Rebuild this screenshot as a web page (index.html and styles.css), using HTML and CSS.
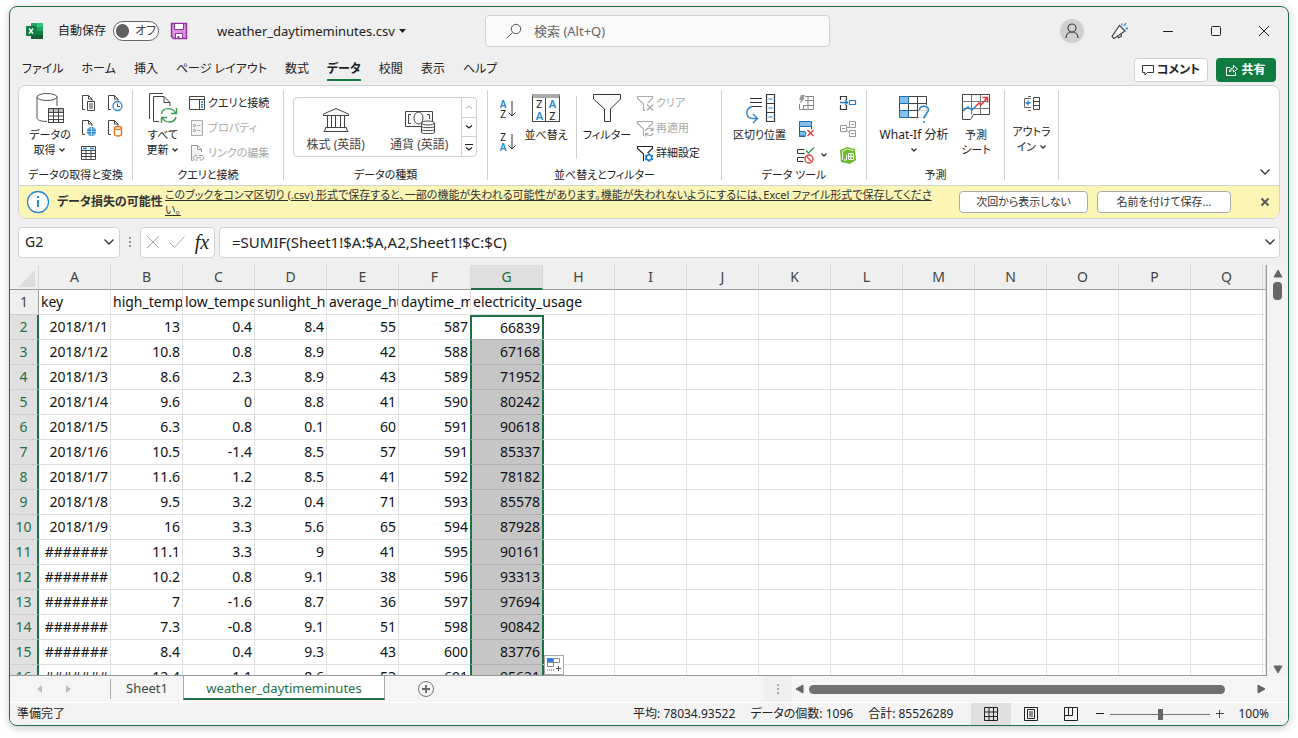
FILE: index.html
```html
<!DOCTYPE html>
<html lang="ja">
<head>
<meta charset="utf-8">
<title>weather_daytimeminutes.csv - Excel</title>
<link rel="stylesheet" href="styles.css">
</head>
<body>
<svg class="defs" width="0" height="0" aria-hidden="true">
  <symbol id="chev" viewBox="0 0 8 8"><path d="M1.5 2.5 4 5l2.500-2.500" fill="none" stroke="#333" stroke-width="1.300"/></symbol>
  <symbol id="chev-lg" viewBox="0 0 12 12"><path d="M1.500 3.500 6 8l4.500-4.500" fill="none" stroke="#333" stroke-width="1.300"/></symbol>
  <symbol id="doc" viewBox="0 0 18 18"><path d="M5 15.500H2.500v-14h6l3.500 3.500v2M8.500 1.500V5H12" fill="none" stroke="#444"/></symbol>
  <symbol id="funnel" viewBox="0 0 18 18"><path d="M1.500 2.500h15v2l-6 5.500v6.500h-3V10l-6-5.500z" fill="none" stroke="currentColor" stroke-width="1.100"/></symbol>
</svg>
<div class="window">
  <header class="titlebar">
    <div class="title-left">
      <svg class="logo" width="18" height="18" viewBox="0 0 18 18"><path d="M5 1h12v16H5z" fill="#21a366"/><path d="M5 1h6v4H5z" fill="#21a366"/><path d="M11 1h6v4h-6z" fill="#33c481"/><path d="M5 5h6v8H5z" fill="#107c41"/><path d="M11 9h6v4h-6z" fill="#107c41"/><path d="M5 13h12v4H5z" fill="#185c37"/><rect x="0" y="4" width="10" height="10" rx="1" fill="#107c41"/><path d="m3 6.500 4 5M7 6.500l-4 5" stroke="#fff" stroke-width="1.400"/></svg>
      <span class="autosave" id="autosave-label">自動保存</span>
      <button class="toggle" role="switch" aria-checked="false" aria-labelledby="autosave-label"><span class="knob"></span><span>オフ</span></button>
      <button class="plain save" aria-label="上書き保存"><svg width="18" height="18" viewBox="0 0 18 18"><path d="M1.500 1.500h15v15h-13l-2-2z" fill="#d793dc" stroke="#8e2f9b" stroke-width="1.400"/><path d="M4.500 1.500h9v6h-9zM5.500 11.500h7v5h-7z" fill="#fff" stroke="#8e2f9b"/><path d="M7.500 14h2v2.500h-2z" fill="#8e2f9b"/></svg></button>
      <button class="plain filename">weather_daytimeminutes.csv <svg width="7" height="4" viewBox="0 0 7 4"><path d="M0 0h7L3.500 4z" fill="#222"/></svg></button>
    </div>
    <label class="search"><svg width="16" height="16" viewBox="0 0 16 16"><circle cx="10" cy="6" r="4.700" fill="none" stroke="#555"/><path d="m6.500 9.500-6 6" stroke="#555"/></svg><input type="text" placeholder="検索 (Alt+Q)" aria-label="検索"></label>
    <div class="title-right">
      <button class="plain" aria-label="アカウント"><svg width="24" height="24" viewBox="0 0 24 24"><circle cx="12" cy="12" r="12" fill="#cfcfcf"/><circle cx="12" cy="9" r="4" fill="none" stroke="#444" stroke-width="1.200"/><path d="M6 19c0-8 12-8 12 0" fill="none" stroke="#444" stroke-width="1.200"/></svg></button>
      <button class="plain" aria-label="新機能"><svg width="20" height="20" viewBox="0 0 20 20"><path d="M9.500 4.500 15 10 4 17.500 2 15.500z" fill="#fafafa" stroke="#444" stroke-width="1.200"/><path d="m7.500 15 1 1.800 3-1.600-.5-2.500" fill="none" stroke="#444" stroke-width="1.200"/><path d="M12 2.500v2M16 2l-2 3M15.500 7.500h2.500" stroke="#2a88d0" stroke-width="1.300"/></svg></button>
      <button class="plain" aria-label="最小化"><svg width="12" height="12" viewBox="0 0 12 12"><path d="M1 6.500h10" stroke="#222"/></svg></button>
      <button class="plain" aria-label="最大化"><svg width="12" height="12" viewBox="0 0 12 12"><rect x="1.500" y="1.500" width="9" height="9" rx="1" fill="none" stroke="#222"/></svg></button>
      <button class="plain" aria-label="閉じる"><svg width="12" height="12" viewBox="0 0 12 12"><path d="m1 1 10 10M11 1 1 11" stroke="#222"/></svg></button>
    </div>
  </header>

  <nav class="tabs">
    <a href="#">ファイル</a><a href="#">ホーム</a><a href="#">挿入</a><a href="#">ページ レイアウト</a><a href="#">数式</a><a href="#" class="active">データ</a><a href="#">校閲</a><a href="#">表示</a><a href="#">ヘルプ</a>
    <span class="grow"></span>
    <div class="tab-actions">
      <button class="comment"><svg width="12" height="12" viewBox="0 0 12 12"><path d="M.5 1.500h11v7H5.500l-2.500 2.500V8.500H.5z" fill="none" stroke="#333"/></svg>コメント</button>
      <button class="share"><svg width="12" height="12" viewBox="0 0 12 12"><path d="M4 3.500H.5v8h9V8M3.500 8c0-3 2-4 4-4V1.500L11.500 5 7.500 8V6c-2 0-3 .5-4 2z" fill="none" stroke="#fff"/></svg>共有</button>
    </div>
  </nav>

  <section class="ribbon-card">
    <div class="ribbon">
      <div class="group g-get">
        <div class="tools">
          <button class="big"><svg width="30" height="32" viewBox="0 0 30 32"><path d="M2 5v21c0 2 4 3.500 10 3.500M22 5v9" fill="none" stroke="#555"/><ellipse cx="12" cy="5" rx="10" ry="3.500" fill="#fff" stroke="#555"/><path d="M13.500 16.500h15v14h-15z" fill="#fff" stroke="#444"/><path d="M14 17h14v3H14z" fill="#bbb"/><path d="M13.500 20.500h15M13.500 24h15M13.500 27.500h15M18.500 17v13.500M23.500 17v13.500" stroke="#444"/></svg><span>データの<br>取得 <svg class="cv"><use href="#chev"/></svg></span></button>
          <div class="icon-grid">
            <button class="plain" aria-label="テキストまたは CSV から"><svg width="18" height="18" viewBox="0 0 18 18"><use href="#doc"/><path d="M7.500 7.500h7v9h-7z" fill="#fff" stroke="#444"/><path d="M9 10h4M9 12h4M9 14h4" stroke="#444"/></svg></button>
            <button class="plain" aria-label="最近使ったソース"><svg width="18" height="18" viewBox="0 0 18 18"><use href="#doc"/><circle cx="11.500" cy="12" r="4.500" fill="#fff" stroke="#2a88d0" stroke-width="1.300"/><path d="M11.500 9.500v3H14" fill="none" stroke="#444"/></svg></button>
            <button class="plain" aria-label="Web から"><svg width="18" height="18" viewBox="0 0 18 18"><use href="#doc"/><circle cx="11.500" cy="12.500" r="4.500" fill="#1a7fd0"/><path d="M7 12.500h9M11.500 8v9M8 10h7M8 15h7" stroke="#cfe6f8" stroke-width=".8"/></svg></button>
            <button class="plain" aria-label="既存の接続"><svg width="18" height="18" viewBox="0 0 18 18"><use href="#doc"/><path d="M8.500 9v6.500c0 2 7 2 7 0V9" fill="#fff" stroke="#e0700f" stroke-width="1.300"/><ellipse cx="12" cy="9" rx="3.500" ry="1.500" fill="#fff" stroke="#e0700f" stroke-width="1.300"/></svg></button>
            <button class="plain" aria-label="テーブルまたは範囲から"><svg width="18" height="18" viewBox="0 0 18 18"><path d="M1.500 2.500h14v13h-14z" fill="#fff" stroke="#444"/><path d="M2 6.500h13.500M2 9.500h13.500M2 12.500h13.500M6 6.500v9M11 6.500v9" stroke="#444"/><path d="M3 4.500h4M10 4.500h4" stroke="#1a7fd0" stroke-width="1.600"/></svg></button>
          </div>
        </div>
        <h3>データの取得と変換</h3>
      </div>

      <div class="group g-query">
        <div class="tools">
          <button class="big"><svg width="30" height="32" viewBox="0 0 30 32"><path d="M1.500 27V1.500H15" fill="none" stroke="#444"/><path d="M11 29.500H5.500v-25H16l6 6V14M16 4.500v6h6" fill="none" stroke="#444"/><path d="M13.500 22c1-7 11-7 14-1M28.500 16v5.500H23M28 25c-2 7-11 6-13.500 1M13.500 31v-5.500H19" fill="none" stroke="#3a9e52" stroke-width="1.400"/></svg><span>すべて<br>更新 <svg class="cv"><use href="#chev"/></svg></span></button>
          <div class="rows">
            <button class="row-btn"><svg width="18" height="18" viewBox="0 0 18 18"><path d="M1.500 2.500h15v13h-15zM1.500 5.500h15" fill="none" stroke="#444"/><path d="M11.500 5.500v10" stroke="#444"/><path d="M13 8h2M13 10.500h2M13 13h2" stroke="#1a7fd0" stroke-width="1.300"/></svg>クエリと接続</button>
            <button class="row-btn" disabled><svg width="18" height="18" viewBox="0 0 18 18"><path d="M3.500 1.500h11v15h-11z" fill="#f3f3f3" stroke="#aaa"/><path d="M5.500 5.500h2v2h-2zM5.500 10.500h2v2h-2z" fill="none" stroke="#aaa"/><path d="M9.500 6.500h3M9.500 11.500h3" stroke="#aaa"/></svg>プロパティ</button>
            <button class="row-btn" disabled><svg width="18" height="18" viewBox="0 0 18 18"><path d="M5 16.500H3.500v-15h6l4 4V8M9.500 1.500v4h4" fill="#f3f3f3" stroke="#999"/><path d="M9 11.500H7.500c-3 0-3 4.500 0 4.500H10M11 11.500h2.500c3 0 3 4.500 0 4.500H12M8 13.800h5" fill="none" stroke="#999"/></svg>リンクの編集</button>
          </div>
        </div>
        <h3>クエリと接続</h3>
      </div>

      <div class="group g-types">
        <div class="tools">
          <div class="gallery">
            <button class="type"><svg width="28" height="28" viewBox="0 0 28 28"><path d="M1.500 9.500V8L14 2.500 26.500 8v1.500zM5.500 9.500v12M9.500 9.500v12M13.500 9.500v12M18.500 9.500v12M22.500 9.500v12M3.500 21.500h21v1.500l1.500 2.500h-24l1.500-2.500z" fill="#f8f8f8" stroke="#444"/></svg>株式 (英語)</button>
            <button class="type"><svg width="32" height="28" viewBox="0 0 32 28"><path d="M2.500 5.500h27v15h-27z" fill="#fafafa" stroke="#444"/><path d="M8 8.500H5.500v9H8M24 8.500h2.500V13" fill="none" stroke="#444"/><ellipse cx="15.500" cy="12" rx="4.500" ry="6" fill="#fff" stroke="#444"/><path d="M18.500 17v9.500c0 1.500 13 1.500 13 0V17" fill="#fff" stroke="#444"/><ellipse cx="25" cy="17" rx="6.500" ry="2" fill="#fff" stroke="#444"/><path d="M18.500 20.500c0 1.500 13 1.500 13 0M18.500 23.500c0 1.500 13 1.500 13 0" fill="none" stroke="#444"/></svg>通貨 (英語)</button>
            <div class="scroller">
              <button aria-label="上へ" disabled><svg width="8" height="8" viewBox="0 0 8 8"><path d="M1 5.500 4 3l3 2.500" fill="none" stroke="#aaa"/></svg></button>
              <button aria-label="下へ"><svg width="8" height="8" viewBox="0 0 8 8"><path d="M1 2.500 4 5l3-2.500" fill="none" stroke="#222" stroke-width="1.300"/></svg></button>
              <button aria-label="その他"><svg width="8" height="8" viewBox="0 0 8 8"><path d="M0 1.500h8M1 4.500 4 7l3-2.500" fill="none" stroke="#222" stroke-width="1.200"/></svg></button>
            </div>
          </div>
        </div>
        <h3>データの種類</h3>
      </div>

      <div class="group g-sort">
        <div class="tools">
          <div class="sorts">
            <button class="plain az" aria-label="昇順"><span><b>A</b><i>Z</i></span><svg width="8" height="18" viewBox="0 0 8 18"><path d="M4 1v15M.5 12.500 4 16l3.500-3.500" fill="none" stroke="#333"/></svg></button>
            <button class="plain az" aria-label="降順"><span><i>Z</i><b>A</b></span><svg width="8" height="18" viewBox="0 0 8 18"><path d="M4 1v15M.5 12.500 4 16l3.500-3.500" fill="none" stroke="#333"/></svg></button>
          </div>
          <button class="big sort"><span class="sort-icon"><i>Z</i><b>A</b><b>A</b><i>Z</i></span><span>並べ替え</span></button>
          <span class="divider"></span>
          <button class="big filter"><svg width="30" height="32" viewBox="0 0 30 32"><path d="M1.500 2.500h27V7l-10 10v12.500h-6V17l-11-10z" fill="#fafafa" stroke="#333"/></svg><span>フィルター</span></button>
          <div class="rows">
            <button class="row-btn" disabled><svg width="18" height="18" viewBox="0 0 18 18"><use href="#funnel"/><path d="M9 9h9v9H9z" fill="#fff"/><path d="m11 10.500 6 6M17 10.500l-6 6" stroke="#aaa" stroke-width="1.200"/></svg>クリア</button>
            <button class="row-btn" disabled><svg width="18" height="18" viewBox="0 0 18 18"><use href="#funnel"/><path d="M8 8h10v10H8z" fill="#fff"/><path d="M9.500 12c1-4 6-3.500 7-1M17 8.500v3h-3M17 14c-1 3.500-6 3-7 .5M9.500 17.500v-3h3" fill="none" stroke="#aaa" stroke-width="1.200"/></svg>再適用</button>
            <button class="row-btn"><svg width="18" height="18" viewBox="0 0 18 18"><use href="#funnel"/><path d="M8 9h10v9H8z" fill="#fff"/><circle cx="13" cy="13.500" r="2.800" fill="none" stroke="#1a7fd0" stroke-width="1.600"/><path d="M13 9v2M13 16v2M9 11.500l2 1M15 14.500l2 1M9 15.500l2-1M15 12.500l2-1" stroke="#1a7fd0" stroke-width="1.500"/></svg>詳細設定</button>
          </div>
        </div>
        <h3>並べ替えとフィルター</h3>
      </div>

      <div class="group g-tools">
        <div class="tools">
          <button class="big"><svg width="32" height="32" viewBox="0 0 32 32"><path d="M6 6.500h12M6 10.500h12M8 14.500h10" stroke="#333"/><path d="M8 14.500c-7 2-7 12 1 12h4M9 22l4.500 4.500L9 31" fill="none" stroke="#2a88d0" stroke-width="1.400"/><path d="M22.500 2.500h8v27h-8zM22.500 11.500h8M22.500 20.500h8" fill="#fafafa" stroke="#333" stroke-width="1.200"/><path d="M24.500 7h4M24.500 16h4M24.500 25h4" stroke="#1a7fd0" stroke-width="1.200"/></svg><span>区切り位置</span></button>
          <div class="icon-col">
            <button class="plain" aria-label="フラッシュ フィル" disabled><svg width="18" height="18" viewBox="0 0 18 18"><path d="M8 2.500h8.500v13h-14V10M11 2.500v13M6.500 11v4.500M8 6.500h8.500M6 11.500h10.500" fill="none" stroke="#888"/><path d="M4 1h4L6.500 4H8l-5.500 6L4 6H2z" fill="#999"/></svg></button>
            <button class="plain" aria-label="重複の削除"><svg width="18" height="18" viewBox="0 0 18 18"><path d="M2.500 1.500h12v5h-12z" fill="#83beec" stroke="#1a6fb5"/><path d="M2.500 6.500v10h6M14.500 6.500V9" fill="#fff" stroke="#444"/><path d="M2.500 11.500H8l1 2-1 2.500H2.500z" fill="#83beec" stroke="#1a6fb5"/><path d="m10.500 10 6 6M16.500 10l-6 6" stroke="#e53935" stroke-width="1.300"/></svg></button>
            <button class="plain split" aria-label="データの入力規則"><svg width="18" height="18" viewBox="0 0 18 18"><path d="M7.500 3.500h-7v4h7M7.500 11.500h-7v4h6" fill="none" stroke="#333"/><path d="m9 4.500 2.500 2.500L17 1.500" fill="none" stroke="#2e9b4f" stroke-width="1.300"/><circle cx="12" cy="13" r="4" fill="#fff" stroke="#e53935" stroke-width="1.300"/><path d="m9.500 10.500 5 5" stroke="#e53935" stroke-width="1.300"/></svg><svg class="cv"><use href="#chev"/></svg></button>
          </div>
          <div class="icon-col">
            <button class="plain" aria-label="統合"><svg width="18" height="18" viewBox="0 0 18 18"><path d="M1.500 6V2.500h6V6M1.500 11v4.500h6V11" fill="none" stroke="#333" stroke-width="1.200"/><path d="M1 8.500h7M6 6l2.500 2.500L6 11" fill="none" stroke="#1a7fd0" stroke-width="1.300"/><path d="M10.500 6.500h6v4h-6z" fill="#fff" stroke="#1a7fd0" stroke-width="1.200"/></svg></button>
            <button class="plain" aria-label="リレーションシップ" disabled><svg width="18" height="18" viewBox="0 0 18 18"><path d="M1.500 5.500h6v6h-6zM10.500 1.500h6v6h-6zM10.500 10.500h6v6h-6zM7.500 7.500h3M7.500 10l3 2.500M3 8.500h3M12 4.500h3M12 13.500h3" fill="none" stroke="#999"/></svg></button>
            <button class="plain" aria-label="データ モデルの管理"><svg width="18" height="18" viewBox="0 0 18 18"><path d="M1 4 8 1l8 2 1 11-6 4-9-2z" fill="#6cbb2e"/><path d="M3.500 14V5l5-2 6 1.500" fill="none" stroke="#e6f6d9"/><path d="M9.500 7.500h5v6h-5zM9.500 10.500h5M12 7.500v6M7.500 9v5H5" fill="none" stroke="#fff"/></svg></button>
          </div>
        </div>
        <h3>データ ツール</h3>
      </div>

      <div class="group g-forecast">
        <div class="tools">
          <button class="big whatif"><svg width="32" height="32" viewBox="0 0 32 32"><path d="M1.500 4.500h27v21h-27z" fill="#fff" stroke="#444"/><path d="M1.500 11.500h27M1.500 18.500h27M10.500 4.500v21M19.500 4.500v21" stroke="#444"/><path d="M1.500 4.500h9v7h-9zM1.500 18.500h9v7h-9z" fill="#83beec" stroke="#1a6fb5"/><path d="M20.500 13h11v19h-11z" fill="#fff" opacity=".8"/><path d="M21.500 18c0-5 9-5 9 0 0 3-4.500 4-4.500 8.500M26 29v2" fill="none" stroke="#2a88d0" stroke-width="1.600"/></svg><span>What-If 分析<br><svg class="cv"><use href="#chev"/></svg></span></button>
          <button class="big forecast"><svg width="30" height="32" viewBox="0 0 30 32"><path d="M1.500 2.500h27v20h-16l-3 5h-8z" fill="#fff" stroke="#444"/><path d="M1.500 9.500h27M1.500 16.500h27M10.500 2.500v20M19.500 2.500v20" stroke="#777"/><path d="M2 19l5-4 4 3 4-4" fill="none" stroke="#2a88d0" stroke-width="1.500"/><path d="m15 14 3-3 2 2 6-7M21.500 5.500h5v5" fill="none" stroke="#e53935" stroke-width="1.500"/></svg><span>予測<br>シート</span></button>
        </div>
        <h3>予測</h3>
      </div>

      <div class="group g-outline">
        <div class="tools">
          <button class="big outline"><svg width="18" height="18" viewBox="0 0 18 18"><path d="M8 3.500H1.500v9H8M5 1.500h3M5 15.500h3" fill="none" stroke="#666"/><path d="M2.500 8h5M5 5.500v5" stroke="#1a7fd0" stroke-width="1.300"/><path d="M10.500 2.500h6v12h-6zM10.500 6.500h6M10.500 10.500h6" fill="none" stroke="#444"/></svg><span>アウトラ<br>イン <svg class="cv"><use href="#chev"/></svg></span></button>
        </div>
      </div>
      <span class="grow"></span>
      <button class="plain collapse" aria-label="リボンを折りたたむ"><svg width="12" height="12"><use href="#chev-lg"/></svg></button>
    </div>

    <div class="message">
      <svg width="24" height="24" viewBox="0 0 24 24"><circle cx="12" cy="12" r="10.500" fill="#fff" stroke="#2a88d0" stroke-width="1.300"/><path d="M12 10v7M12 6v2" stroke="#2a88d0" stroke-width="2"/></svg>
      <strong>データ損失の可能性</strong>
      <a href="#">このブックをコンマ区切り (.csv) 形式で保存すると、一部の機能が失われる可能性があります。機能が失われないようにするには、Excel ファイル形式で保存してください。</a>
      <button class="msg-btn">次回から表示しない</button>
      <button class="msg-btn wide">名前を付けて保存...</button>
      <button class="plain dismiss" aria-label="閉じる"><svg width="10" height="10" viewBox="0 0 10 10"><path d="m1.500 1.500 7 7M8.500 1.500l-7 7" stroke="#555" stroke-width="1.800"/></svg></button>
    </div>
  </section>

  <div class="formula-bar">
    <label class="namebox"><input type="text" value="G2" aria-label="名前ボックス"><svg width="12" height="12"><use href="#chev-lg"/></svg></label>
    <svg class="grip" width="4" height="12" viewBox="0 0 4 12"><path d="M1 1h2v2H1zM1 5h2v2H1zM1 9h2v2H1z" fill="#999"/></svg>
    <div class="fx">
      <button class="plain" aria-label="キャンセル"><svg width="14" height="14" viewBox="0 0 14 14"><path d="m1 1 12 12M13 1 1 13" stroke="#aaa"/></svg></button>
      <button class="plain" aria-label="入力"><svg width="16" height="14" viewBox="0 0 16 14"><path d="m.5 7.500 5 5L15.500 1.500" fill="none" stroke="#aaa"/></svg></button>
      <button class="plain fx-btn" aria-label="関数の挿入">fx</button>
    </div>
    <label class="formula"><input type="text" value="=SUMIF(Sheet1!$A:$A,A2,Sheet1!$C:$C)" aria-label="数式バー"><svg width="12" height="12"><use href="#chev-lg"/></svg></label>
  </div>

  <main class="sheet">
    <div class="grid-wrap">
      <table class="grid">
        <colgroup id="cols"><col class="c-num"></colgroup>
        <thead><tr id="head"><th class="corner"><svg width="17" height="17" viewBox="0 0 17 17"><path d="M17 0v17H0z" fill="#dcdcdc"/></svg></th></tr></thead>
        <tbody id="rows"></tbody>
      </table>
      <button class="autofill" aria-label="オートフィル オプション"><svg width="16" height="16" viewBox="0 0 16 16"><path d="M1 1h6v5H1z" fill="#3b78e7"/><path d="M7.500 1.500h6v4h-6zM1.500 5.500h6v4h-6z" fill="#fff" stroke="#888"/><path d="M1 13h8" stroke="#555" stroke-dasharray="1 1"/><path d="M10 11.500h5M12.500 9v5" stroke="#555"/></svg></button>
    </div>
    <div class="vscroll">
      <svg width="10" height="8" viewBox="0 0 10 8"><path d="M5 0l4 7H1z" fill="#666" stroke="#666" stroke-linejoin="round"/></svg>
      <span class="vthumb"></span>
      <span class="grow"></span>
      <svg width="10" height="8" viewBox="0 0 10 8"><path d="M5 8l4-7H1z" fill="#666" stroke="#666" stroke-linejoin="round"/></svg>
    </div>
  </main>

  <div class="sheetbar">
    <div class="sheetnav">
      <button class="plain" aria-label="前のシート"><svg width="6" height="8" viewBox="0 0 6 8"><path d="M5 0v8L0 4z" fill="#bbb"/></svg></button>
      <button class="plain" aria-label="次のシート"><svg width="6" height="8" viewBox="0 0 6 8"><path d="M1 0v8l5-4z" fill="#bbb"/></svg></button>
    </div>
    <button class="sheet-tab">Sheet1</button>
    <button class="sheet-tab current">weather_daytimeminutes</button>
    <button class="plain add" aria-label="新しいシート"><svg width="18" height="18" viewBox="0 0 18 18"><circle cx="9" cy="9" r="7.500" fill="none" stroke="#777"/><path d="M5 9h8M9 5v8" stroke="#666" stroke-width="1.800"/></svg></button>
    <span class="grow"></span>
    <span class="splitter"><svg width="4" height="12" viewBox="0 0 4 12"><path d="M1 1h2v2H1zM1 5h2v2H1zM1 9h2v2H1z" fill="#aaa"/></svg></span>
    <div class="hscroll">
      <svg width="8" height="10" viewBox="0 0 8 10"><path d="M0 5l7-4v8z" fill="#666" stroke="#666" stroke-linejoin="round"/></svg>
      <span class="hthumb"></span>
      <svg width="8" height="10" viewBox="0 0 8 10"><path d="M8 5L1 1v8z" fill="#666" stroke="#666" stroke-linejoin="round"/></svg>
    </div>
  </div>

  <footer class="status">
    <span>準備完了</span>
    <span class="grow"></span>
    <span>平均: 78034.93522</span>
    <span>データの個数: 1096</span>
    <span>合計: 85526289</span>
    <div class="views">
      <button class="on" aria-label="標準"><svg width="14" height="14" viewBox="0 0 14 14"><path d="M.5.5h13v13H.5zM.5 5h13M.5 9.500h13M5 .5v13M9.500.5v13" fill="none" stroke="#222"/></svg></button>
      <button aria-label="ページ レイアウト"><svg width="14" height="14" viewBox="0 0 14 14"><path d="M.5.5h13v13H.5zM3.500 2.500h7v9h-7zM5 5h4M5 7h4M5 9h4" fill="none" stroke="#222"/></svg></button>
      <button aria-label="改ページ プレビュー"><svg width="14" height="14" viewBox="0 0 14 14"><path d="M.5.5h13v13H.5zM.5 8.500h8v-8M4.500.5v8" fill="none" stroke="#222"/></svg></button>
    </div>
    <div class="zoom">
      <button class="plain" aria-label="縮小"><svg width="8" height="8" viewBox="0 0 8 8"><path d="M0 3.500h8" stroke="#222"/></svg></button>
      <input type="range" min="0" max="200" value="100" aria-label="ズーム">
      <button class="plain" aria-label="拡大"><svg width="8" height="8" viewBox="0 0 8 8"><path d="M0 3.500h8M3.500 0v8" stroke="#444"/></svg></button>
      <span>100%</span>
    </div>
  </footer>
</div>
<script src="app.js"></script>
</body>
</html>
```
FILE: styles.css
```css
* { box-sizing: border-box; }
html { background: #fff; }
body {
  margin: 0;
  padding: 6px 9px 12px;
  height: 100vh;
  font-family: "Noto Sans", "Noto Sans CJK JP", sans-serif;
  font-size: 12px;
  line-height: 16px;
  font-feature-settings: "palt";
  color: #222;
}
button, input { font: inherit; font-feature-settings: inherit; color: inherit; margin: 0; }
button { background: none; border: 0; padding: 0; white-space: nowrap; }
svg { display: block; flex: none; }
a { color: inherit; text-decoration: none; }
.defs { position: absolute; }
.grow { flex: 1; }
.plain { display: flex; align-items: center; justify-content: center; }

.window {
  display: flex;
  flex-direction: column;
  height: 100%;
  background: #efefef;
  border: 1px solid #1e7145;
  border-radius: 8px;
  overflow: hidden;
  box-shadow: 0 2px 8px rgba(0, 0, 0, .22);
}

/* Title bar */
.titlebar { display: flex; align-items: center; height: 48px; flex: none; }
.title-left { display: flex; align-items: center; width: 475px; padding-left: 16px; flex: none; }
.autosave { margin-left: 14px; width: 55px; }
.toggle {
  display: flex; align-items: center; gap: 6px;
  width: 46px; height: 20px; padding: 0 2px;
  border: 1px solid #666; border-radius: 10px; background: #fff; color: #444;
}
.knob { width: 14px; height: 14px; border-radius: 7px; background: #606060; }
.save { margin-left: 11px; }
.filename { margin-left: 29px; gap: 4px; font-size: 13px; }
.search {
  display: flex; align-items: center; gap: 10px;
  width: 345px; height: 32px; padding-left: 20px;
  border: 1px solid #cfcfcf; border-radius: 4px; background: #fafafa;
}
.search input { flex: 1; min-width: 0; border: 0; background: none; outline: 0; font-size: 13px; }
.search input::placeholder { color: #666; opacity: 1; }
.title-right { display: flex; margin-left: auto; }
.title-right .plain { width: 48px; height: 32px; }

/* Ribbon tabs */
.tabs { display: flex; align-items: center; height: 30px; flex: none; padding: 0 12px; gap: 18px; }
.tabs a { height: 22px; line-height: 20px; border-bottom: 2px solid transparent; white-space: nowrap; }
.tabs .active { font-weight: 700; border-color: #107c41; }
.tab-actions { display: flex; gap: 8px; }
.comment, .share {
  display: flex; align-items: center; justify-content: center; gap: 3px;
  height: 24px; border-radius: 4px; font-weight: 700;
}
.comment { width: 74px; background: #fff; border: 1px solid #d0d0d0; }
.share { width: 60px; background: #107c41; color: #fff; }

/* Ribbon */
.ribbon-card {
  flex: none; margin: 0 8px; background: #fff;
  border: 1px solid #d2d2d2; border-radius: 8px; overflow: hidden;
}
.ribbon { display: flex; height: 99px; padding: 4px 0 5px; font-size: 11px; }
.group { display: flex; flex-direction: column; flex: none; border-right: 1px solid #d0d0d0; }
.group h3 { margin: 0; font-size: 11px; font-weight: 400; text-align: center; line-height: 10px; white-space: nowrap; }
.tools { display: flex; flex: 1; }
.g-get { width: 114px; }
.g-query { width: 151px; }
.g-types { width: 204px; }
.g-sort { width: 234px; }
.g-tools { width: 145px; }
.g-forecast { width: 138px; }
.g-outline { width: 54px; }
.big { display: flex; flex-direction: column; align-items: center; width: 60px; line-height: 15px; padding-top: 2px; gap: 3px; align-self: flex-start; }
.cv { width: 8px; height: 8px; display: inline-block; }
.icon-grid { display: grid; grid-template-columns: 26px 26px; grid-auto-rows: 25px; }
.g-get .big { width: 62px; }
.g-get .icon-grid { margin-left: -5px; }
.rows { display: flex; flex-direction: column; }
.row-btn { display: flex; align-items: center; gap: 2px; height: 25px; }
.row-btn:disabled { color: #aaa; }
.g-query .rows { margin-left: -5px; }

.gallery { display: flex; width: 184px; height: 60px; margin: 7px 0 0 9px; border: 1px solid #d0d0d0; border-radius: 4px; font-size: 12px; }
.type { display: flex; flex-direction: column; align-items: center; justify-content: flex-end; flex: 1; padding-bottom: 3px; gap: 3px; color: #444; }
.scroller { display: flex; flex-direction: column; width: 15px; border-left: 1px solid #d0d0d0; }
.scroller button { flex: 1; display: flex; align-items: center; justify-content: center; }
.scroller button + button { border-top: 1px solid #d0d0d0; }

.sorts { display: flex; flex-direction: column; width: 40px; padding-top: 2px; }
.az { height: 33px; gap: 2px; }
.az span { display: flex; flex-direction: column; font-size: 10px; line-height: 10px; }
i { font-style: normal; }
.az b, .sort-icon b { color: #2a88d0; font-weight: 600; }
.sort { width: 36px; }
.sort-icon {
  display: grid; grid-template-columns: 13px 13px; justify-content: center;
  width: 28px; height: 28px; margin: 2px 0; border: 1px solid #444; border-top: 4px solid #aaa;
  line-height: 11px; text-align: center;
  background: linear-gradient(90deg, transparent 12px, #444 12px, #444 13px, transparent 13px);
}
.divider { width: 1px; height: 63px; margin: 6px 0 0 12px; background: #d0d0d0; }
.filter { margin-right: -1px; }
.g-tools .big { width: 75px; }
.icon-col { display: flex; flex-direction: column; width: 42px; }
.g-tools .icon-col + .icon-col { width: 26px; }
.icon-col .plain { height: 26px; justify-content: flex-start; }
.split { gap: 5px; }
.big.whatif { width: 94px; font-size: 12px; }
.big.forecast { width: 30px; }
.whatif span { text-align: center; }
.big.outline { width: 53px; padding-top: 5px; gap: 11px; }
.collapse { align-self: flex-end; width: 28px; height: 16px; }

/* Message bar */
.message {
  display: flex; align-items: center; height: 33px; padding-left: 7px;
  background: #fcf6b6; border-top: 1px solid #d2d2d2; color: #333;
}
.message strong { width: 103px; margin-left: 7px; white-space: nowrap; }
.message a { flex: 1; min-width: 0; margin-left: 5px; margin-right: 20px; font-size: 11px; line-height: 15px; text-decoration: underline; }
.msg-btn { width: 129px; height: 22px; border: 1px solid #aaa; border-radius: 4px; background: #fff; font-size: 11px; line-height: 18px; }
.msg-btn.wide { width: 134px; margin-left: 9px; }
.dismiss { width: 28px; height: 28px; margin-left: 20px; }

/* Formula bar */
.formula-bar { display: flex; align-items: center; flex: none; height: 46px; padding: 0 8px; }
.namebox, .fx, .formula { display: flex; align-items: center; height: 31px; background: #fff; border: 1px solid #d2d2d2; border-radius: 4px; }
.namebox input, .formula input { flex: 1; min-width: 0; border: 0; outline: 0; background: none; padding: 0; font-size: 15px; line-height: 20px; }
.namebox { width: 102px; padding: 0 4px 0 6px; }
.namebox input { font-size: 14px; }
.grip { margin: 0 8px; }
.fx { width: 75px; justify-content: space-around; }
.fx-btn { font-family: "Liberation Serif", serif; font-style: italic; font-size: 20px; }
.formula { flex: 1; margin-left: 4px; padding: 0 3px 0 12px; }

/* Grid */
.sheet { display: flex; flex: 1; min-height: 0; }
.grid-wrap { position: relative; flex: 1; min-width: 0; overflow: hidden; border-right: 1px solid #999; border-bottom: 1px solid #999; }
.grid { width: 100%; table-layout: fixed; border-collapse: separate; border-spacing: 0; font-family: "Noto Sans", sans-serif; font-size: 14px; line-height: 24px; background: #fff; }
.c-num { width: 29px; }
.c-data { width: 72px; }
.grid th, .grid td { height: 25px; padding: 0 2px; font-weight: 400; white-space: nowrap; overflow: hidden; border-right: 1px solid #e0e0e0; border-bottom: 1px solid #e0e0e0; color: #111; }
.grid td { text-align: right; }
.grid thead th { background: #efefef; color: #444; border-bottom-color: #999; border-right-color: #d8d8d8; }
.grid .corner { padding: 2px 2px 0 8px; }
.grid thead th.picked { background: #dfdfdf; color: #1e7145; border-bottom: 2px solid #1e7145; line-height: 23px; }
.grid tbody th { background: #efefef; color: #444; border-right-color: #999; border-bottom-color: #d0d0d0; padding: 0; }
.grid tbody th.picked { background: #e0e0e0; color: #1e7145; border-right: 2px solid #1e7145; }
.grid .label { text-align: left; }
.grid .spill { overflow: visible; border-right-color: transparent; }
.grid .sel { background: #c6c6c6; border-bottom-color: #b0b0b0; border-right-color: #1e7145; box-shadow: -1px 0 0 #1e7145, inset 1px 0 0 #1e7145, 1px 0 0 #1e7145; overflow: visible; }
.grid .first { background: #fff; border-top: 2px solid #1e7145; line-height: 22px; }
.autofill { position: absolute; left: 534px; bottom: 0; width: 20px; height: 20px; padding: 1px; background: #fff; border: 1px solid #aaa; }
.vscroll { display: flex; flex-direction: column; align-items: center; width: 21px; padding: 5px 0 3px; background: #f3f3f3; }
.vthumb { width: 9px; height: 18px; margin-top: 4px; border-radius: 4px; background: #666; }

/* Sheet tabs */
.sheetbar { display: flex; align-items: center; height: 27px; flex: none; background: #f5f5f5; border-bottom: 1px solid #fff; font-size: 13px; }
.sheetnav { display: flex; width: 101px; height: 20px; padding-left: 16px; border-right: 1px solid #aaa; }
.sheetnav .plain { width: 28px; }
.sheet-tab { width: 72px; height: 24px; align-self: flex-start; line-height: 24px; color: #444; }
.sheet-tab.current { width: 202px; background: #fff; border: 1px solid #aaa; border-top: 0; border-bottom: 2px solid #1e7145; color: #1e7145; }
.add { margin-left: 32px; }
.splitter { display: flex; align-items: center; justify-content: center; width: 28px; height: 100%; background: #efefef; }
.hscroll { display: flex; align-items: center; width: 40%; max-width: 473px; margin-right: 23px; padding-left: 4px; }
.hthumb { flex: 1; height: 9px; margin: 0 32px 0 5px; border-radius: 5px; background: #707070; }

/* Status bar */
.status { display: flex; align-items: center; height: 22px; flex: none; padding: 0 19px 0 7px; gap: 15px; background: #f3f3f3; white-space: nowrap; }
.views { display: flex; margin-left: 3px; }
.views button { width: 40px; height: 22px; display: flex; align-items: center; justify-content: center; }
.views .on { background: #dfdfdf; }
.zoom { display: flex; align-items: center; margin-left: -10px; }
.zoom span { margin-left: 14px; }
.zoom input { width: 100px; height: 16px; margin: 0 6px; appearance: none; background: linear-gradient(#777, #777) center / 100% 1px no-repeat; }
.zoom input::-webkit-slider-thumb { appearance: none; width: 5px; height: 11px; background: #666; }
```
FILE: app.js
```js
const columns = "ABCDEFGHIJKLMNOPQ".split("");
const labels = ["key", "high_temperature", "low_temperature", "sunlight_hours", "average_humidity", "daytime_minutes", "electricity_usage"];
const data = [
  ["2018/1/1", "13", "0.4", "8.4", "55", "587", "66839"],
  ["2018/1/2", "10.8", "0.8", "8.9", "42", "588", "67168"],
  ["2018/1/3", "8.6", "2.3", "8.9", "43", "589", "71952"],
  ["2018/1/4", "9.6", "0", "8.8", "41", "590", "80242"],
  ["2018/1/5", "6.3", "0.8", "0.1", "60", "591", "90618"],
  ["2018/1/6", "10.5", "-1.4", "8.5", "57", "591", "85337"],
  ["2018/1/7", "11.6", "1.2", "8.5", "41", "592", "78182"],
  ["2018/1/8", "9.5", "3.2", "0.4", "71", "593", "85578"],
  ["2018/1/9", "16", "3.3", "5.6", "65", "594", "87928"],
  ["#######", "11.1", "3.3", "9", "41", "595", "90161"],
  ["#######", "10.2", "0.8", "9.1", "38", "596", "93313"],
  ["#######", "7", "-1.6", "8.7", "36", "597", "97694"],
  ["#######", "7.3", "-0.8", "9.1", "51", "598", "90842"],
  ["#######", "8.4", "0.4", "9.3", "43", "600", "83776"],
  ["#######", "12.4", "-1.1", "8.6", "53", "601", "95621"]
];

function add(parent, tag, text, className) {
  const el = document.createElement(tag);
  if (text) el.textContent = text;
  if (className) el.className = className;
  parent.appendChild(el);
  return el;
}

const cols = document.getElementById("cols");
const head = document.getElementById("head");
columns.forEach((name) => {
  add(cols, "col", "", "c-data");
  add(head, "th", name, name === "G" ? "picked" : "");
});
add(cols, "col");
add(head, "th");

const body = document.getElementById("rows");
[labels, ...data].forEach((values, r) => {
  const row = add(body, "tr");
  add(row, "th", String(r + 1), r > 0 ? "picked" : "");
  for (let c = 0; c <= columns.length; c++) {
    let cls = "";
    if (r === 0) cls = c === 6 ? "label spill" : "label";
    else if (c === 6) cls = r === 1 ? "sel first" : "sel";
    add(row, "td", values[c] || "", cls);
  }
});
```
